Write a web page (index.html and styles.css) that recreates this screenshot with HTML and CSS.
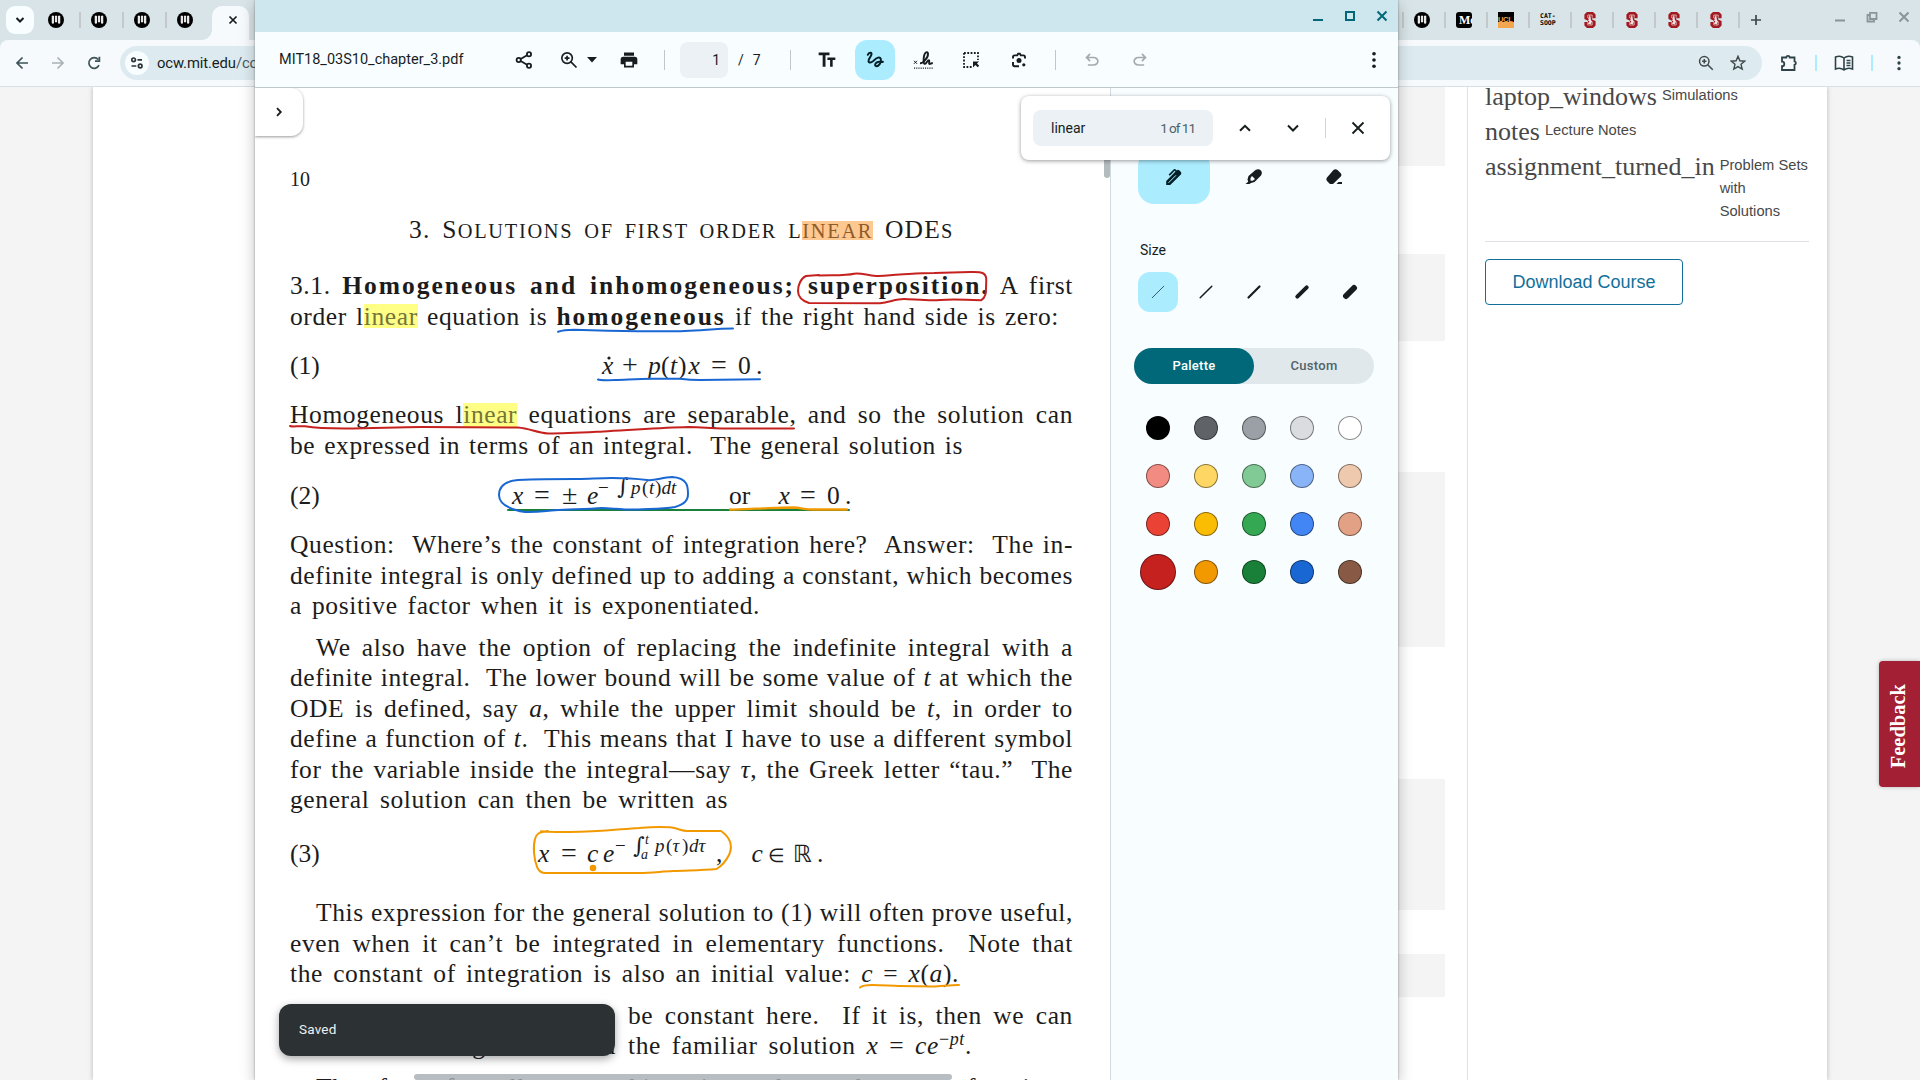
FILE: index.html
```html
<!DOCTYPE html>
<html lang="en">
<head>
<meta charset="utf-8">
<title>MIT18_03S10_chapter_3.pdf</title>
<link rel="stylesheet" href="styles.css">
</head>
<body>
<svg width="0" height="0" class="defs">
  <defs>
    <symbol id="mit" viewBox="0 0 16 16"><circle cx="8" cy="8" r="8" fill="#000"/><path d="M4.200 4h1.300v7.200H4.200zM7.400 4h1.300v6H7.400zM10.500 4h1.300v7.200h-1.300z" fill="#fff" stroke="#fff" stroke-width=".8"/></symbol>
    <symbol id="stanford" viewBox="0 0 16 16"><path d="M5 0h6l2.600 2.500v3.700h-3.500v1.200L13.600 9v4.500L11 16H5l-2.600-2.500V10h3.500V8.700L2.400 7V2.500z" fill="#a11a22"/><path d="M10.200 5.800V3H5.800v3l4.400 3.600V13H5.800v-3" fill="none" stroke="#e6c3c5" stroke-width=".8"/><path d="M8 2.500 6.500 6h.8L6 9h1.300L6 12h2.500v1.500L9 12l1-3H9l-.3-3z" fill="#fff" opacity=".85"/></symbol>
    <symbol id="zoomin" viewBox="0 0 24 24"><circle cx="9.700" cy="9.700" r="6.300" fill="none" stroke="currentColor" stroke-width="2"/><path d="M14.300 14.300 21 21M9.700 6.800v5.800M6.800 9.700h5.800" fill="none" stroke="currentColor" stroke-width="2"/></symbol>
    <symbol id="dots" viewBox="0 0 24 24"><circle cx="12" cy="4.500" r="2.200"/><circle cx="12" cy="12" r="2.200"/><circle cx="12" cy="19.500" r="2.200"/></symbol>
    <symbol id="undo" viewBox="0 0 24 24"><path d="M7 19v-2h7.100q1.575 0 2.737-1Q18 15 18 13.500T16.837 11Q15.675 10 14.100 10H7.800l2.600 2.600L9 14 4 9l5-5 1.400 1.400L7.800 8h6.300q2.425 0 4.163 1.575Q20 11.150 20 13.500t-1.737 3.925Q16.525 19 14.100 19z"/></symbol>
  </defs>
</svg>
<div class="desktop">
  <section class="browser">
    <div class="tabstrip">
      <div class="tab-search"><svg width="12" height="12" viewBox="0 0 12 12"><path d="M2.500 4 6 7.500 9.500 4" fill="none" stroke="#171d1e" stroke-width="2"/></svg></div>
      <div class="tabs-left">
        <svg class="fav"><use href="#mit"/></svg><i></i>
        <svg class="fav"><use href="#mit"/></svg><i></i>
        <svg class="fav"><use href="#mit"/></svg><i></i>
        <svg class="fav"><use href="#mit"/></svg>
      </div>
      <div class="tab-active"><svg width="10" height="10" viewBox="0 0 10 10"><path d="m1.500 1.500 7 7m0-7-7 7" stroke="#171d1e" stroke-width="1.700"/></svg></div>
      <div class="tabs-right">
        <i></i><svg class="fav"><use href="#mit"/></svg>
        <i></i><span class="fav fav-medium">Me</span>
        <i></i><span class="fav fav-ucl"><b>UCL</b></span>
        <i></i><span class="fav fav-cat">CAT-<br>SOOP</span>
        <i></i><svg class="fav"><use href="#stanford"/></svg>
        <i></i><svg class="fav"><use href="#stanford"/></svg>
        <i></i><svg class="fav"><use href="#stanford"/></svg>
        <i></i><svg class="fav"><use href="#stanford"/></svg>
        <i></i><svg class="plus" width="12" height="12" viewBox="0 0 12 12"><path d="M6 1v10M1 6h10" stroke="#3f484b" stroke-width="1.700"/></svg>
      </div>
      <div class="controls">
        <svg width="12" height="12" viewBox="0 0 12 12"><path d="M1 9.500h10" stroke="currentColor" stroke-width="2"/></svg>
        <svg width="12" height="12" viewBox="0 0 12 12"><path d="M4 1.800h6.500V8H4zM4 4H1.500v6.500H8V8" fill="none" stroke="currentColor" stroke-width="1.800"/></svg>
        <svg width="12" height="12" viewBox="0 0 12 12"><path d="m1.500 1.500 9 9m0-9-9 9" stroke="currentColor" stroke-width="2"/></svg>
      </div>
    </div>
    <div class="navbar">
      <svg width="14" height="14" viewBox="0 0 14 14"><path d="M13 7H2m5.500-5.500L2 7l5.500 5.500" fill="none" stroke="#3c5358" stroke-width="1.700"/></svg>
      <svg width="14" height="14" viewBox="0 0 14 14"><path d="M1 7h11M6.500 1.500 12 7l-5.500 5.500" fill="none" stroke="#a9b3b6" stroke-width="1.700"/></svg>
      <svg width="14" height="14" viewBox="0 0 14 14"><path d="M12 9.200A5.300 5.300 0 1 1 11.200 3.500M12.400.8v4.400H8" fill="none" stroke="#3c5358" stroke-width="1.700"/></svg>
      <div class="omnibox">
        <span class="site-info"><svg width="14" height="14" viewBox="0 0 14 14" fill="none" stroke="#2c3437" stroke-width="1.700"><circle cx="3.600" cy="3.800" r="1.800"/><path d="M7.500 3.800H12M1.500 10h4.800"/><circle cx="10.200" cy="10" r="1.800"/></svg></span>
        <span class="url">ocw.mit.edu<em>/co</em></span>
        <svg class="omni-zoom" width="18" height="18"><use href="#zoomin"/></svg>
        <svg class="omni-star" width="16" height="16" viewBox="0 0 16 16"><path d="m8 1.300 1.900 4.500 4.800.4-3.700 3.100 1.200 4.800L8 11.600l-4.200 2.500L5 9.300 1.300 6.200l4.800-.4z" fill="none" stroke="#3f484b" stroke-width="1.400"/></svg>
      </div>
      <div class="nav-actions">
        <svg width="18" height="18" viewBox="0 0 18 18"><path d="M2 3.500h4.300a1.700 1.700 0 0 1 3.400 0H14.500v3.800a1.800 1.800 0 0 1 0 3.500V16H2v-3.800a2.200 2.200 0 0 0 0-4.600z" fill="none" stroke="#2d4348" stroke-width="1.800"/></svg>
        <i></i>
        <svg width="20" height="18" viewBox="0 0 20 18"><path d="M10 4C7.500 2 4 2 1.500 3v12c2.500-1 6-1 8.500 1 2.500-2 6-2 8.500-1V3C16 2 12.500 2 10 4zv12M12.500 6.500h4M12.500 9h4M12.500 11.500h4" fill="none" stroke="#2d4348" stroke-width="1.600"/></svg>
        <i></i>
        <svg width="18" height="18" fill="#2d4348"><use href="#dots"/></svg>
      </div>
    </div>
    <div class="web">
      <div class="course">
        <div class="modules"><i class="m1"></i><i class="m2"></i><i class="m3"></i><i class="m4"></i><i class="m5"></i></div>
        <aside class="resources">
          <div class="res"><span class="glyph">laptop_windows</span><span>Simulations</span></div>
          <div class="res"><span class="glyph">notes</span><span>Lecture Notes</span></div>
          <div class="res last"><span class="glyph">assignment_turned_in</span><span>Problem Sets with Solutions</span></div>
          <hr>
          <a class="download">Download Course</a>
        </aside>
      </div>
      <div class="feedback"><span>Feedback</span></div>
    </div>
  </section>

  <section class="viewer">
    <div class="titlebar">
      <svg width="12" height="12" viewBox="0 0 12 12"><path d="M1 10h10" stroke="currentColor" stroke-width="2"/></svg>
      <svg width="12" height="12" viewBox="0 0 12 12"><path d="M2 2h8v8H2z" fill="none" stroke="currentColor" stroke-width="2"/></svg>
      <svg width="12" height="12" viewBox="0 0 12 12"><path d="m1.500 1.500 9 9m0-9-9 9" stroke="currentColor" stroke-width="2"/></svg>
    </div>
    <div class="toolbar">
      <span class="filename">MIT18_03S10_chapter_3.pdf</span>
      <svg class="t share" width="20" height="20" viewBox="0 0 20 20" fill="none" stroke="currentColor" stroke-width="1.800"><circle cx="15" cy="4.300" r="2.100"/><circle cx="4.700" cy="10" r="2.100"/><circle cx="15" cy="15.700" r="2.100"/><path d="m6.600 9 6.500-3.700M6.600 11l6.500 3.700"/></svg>
      <svg class="t zin" width="20" height="20"><use href="#zoomin"/></svg>
      <svg class="t caret" width="10" height="6" viewBox="0 0 10 6"><path d="M0 0h10L5 5.500z" fill="currentColor"/></svg>
      <svg class="t print" width="20" height="20" viewBox="0 0 24 24"><path d="M6 7V3h12v4zM2 17v-6q0-3 3-3h14q3 0 3 3v6h-4v4H6v-4zm6-3v5h8v-5z" fill="currentColor" fill-rule="evenodd"/></svg>
      <i></i>
      <span class="page-input">1</span><span class="pages">/ &nbsp;7</span>
      <i class="after-pages"></i>
      <svg class="t tt" width="20" height="20" viewBox="0 0 24 24"><path d="M2 3h13v3.200h-4.800V20H6.800V6.200H2zM12.500 9H22v3h-3.200v8h-3.100v-8h-3.200z" fill="currentColor"/></svg>
      <span class="draw"><svg width="20" height="20" viewBox="0 0 20 20"><path d="M2.800 4.800C4.500 2 7.300 2.300 6.300 5c-.8 2.400-3.200 4-2.800 6.300.6 2.400 3.800 1 6-1.400 2-2.300 5.300-3.400 6.300-1 1 3.600-2.500 7.800-4.700 7.200-2-.9-.6-3.800 2-4.200 2.200-.2 3.300.4 4.800-.1" fill="none" stroke="currentColor" stroke-width="2" stroke-linecap="round"/></svg></span>
      <svg class="t sign" width="22" height="20" viewBox="0 0 22 20"><path d="m2 10.800 3 3m0-3-3 3" stroke="currentColor" stroke-width="1"/><path d="M8 13.300c3 .2 8.500-6 8-9.800-.3-2.500-3.200-1.500-4 2.500-.6 3.500-.6 8.100 1 7.900 1.500-.2 2.500-3.800 3.900-3.600 1.200.2-.6 3.500.7 3.700 1 0 1.500-.8 3.200-1" fill="none" stroke="currentColor" stroke-width="1.900"/><path d="M2 18.200h19" stroke="currentColor" stroke-width="1.200" stroke-dasharray="1.100 1.100"/></svg>
      <svg class="t select" width="20" height="20" viewBox="0 0 20 20"><path d="M3 3h14v7M3 3v14h8" fill="none" stroke="currentColor" stroke-width="1.800" stroke-dasharray="1.800 1.500"/><path d="M12 11.500h6l-2 2 2.200 2.300-1.500 1.500-2.300-2.300-2.400 2.500z" fill="currentColor"/></svg>
      <svg class="t lens" width="20" height="20" viewBox="0 0 20 20"><path d="M4 8.500V7q0-1.600 1.600-1.600H8.200l.9-1.600h1.800l.9 1.600h2.600Q16 5.400 16 7v1.500M4 12v2.500q0 1.700 1.700 1.700H10" fill="none" stroke="currentColor" stroke-width="1.900"/><circle cx="10" cy="10.600" r="2.500" fill="currentColor"/><circle cx="14.800" cy="14.800" r="1.600" fill="currentColor"/></svg>
      <i class="after-lens"></i>
      <svg class="t undo" width="20" height="20" fill="#a3abad"><use href="#undo"/></svg>
      <svg class="t redo" width="20" height="20" fill="#a3abad"><use href="#undo"/></svg>
      <svg class="t more" width="20" height="20" fill="#171d1e"><use href="#dots"/></svg>
    </div>
    <div class="workspace">
      <div class="document">
        <div class="page">
          <p class="ln folio">10</p>
          <p class="ln heading">3. S<span class="sc">olutions of first order l<mark>inear</mark></span> ODE<span class="sc">s</span></p>
          <p class="ln g1">3.1. <b>Homogeneous and inhomogeneous; superposition.</b> A first</p>
          <p class="ln w-zero">order l<mark>inear</mark> equation is <b>homogeneous</b> if the right hand side is zero:</p>
          <svg class="eq g2" viewBox="0 1 783 30.500"><text y="23.700"><tspan x="0">(1)</tspan><tspan x="312" class="it">x</tspan><tspan x="332" class="op">+</tspan><tspan x="358" class="it">p</tspan><tspan x="371">(</tspan><tspan x="380" class="it">t</tspan><tspan x="388">)</tspan><tspan x="398.500" class="it">x</tspan><tspan x="421" class="op">=</tspan><tspan x="448">0</tspan><tspan x="466">.</tspan></text><circle cx="319" cy="8" r="1.600"/></svg>
          <p class="ln g3">Homogeneous l<mark>inear</mark> equations are separable, and so the solution can</p>
          <p class="ln w-is">be expressed in terms of an integral.&nbsp; The general solution is</p>
          <svg class="eq g4" viewBox="0 1 783 30.500"><text y="23.700"><tspan x="0">(2)</tspan><tspan x="222" class="it">x</tspan><tspan x="244" class="op">=</tspan><tspan x="272" class="op">±</tspan><tspan x="297" class="it">e</tspan><tspan x="439">or</tspan><tspan x="488.500" class="it">x</tspan><tspan x="510" class="op">=</tspan><tspan x="537">0</tspan><tspan x="555">.</tspan></text><text y="13.500" class="sup"><tspan x="308">−</tspan><tspan x="341" class="it">p</tspan><tspan x="352">(</tspan><tspan x="359" class="it">t</tspan><tspan x="365">)</tspan><tspan x="371.500" class="it">dt</tspan></text><text x="327" y="14" class="int">∫</text></svg>
          <p class="ln g3">Question:&nbsp; Where’s the constant of integration here?&nbsp; Answer:&nbsp; The in-</p>
          <p class="ln">definite integral is only defined up to adding a constant, which becomes</p>
          <p class="ln w-exp">a positive factor when it is exponentiated.</p>
          <p class="ln g5 indent">We also have the option of replacing the indefinite integral with a</p>
          <p class="ln">definite integral.&nbsp; The lower bound will be some value of <em>t</em> at which the</p>
          <p class="ln">ODE is defined, say <em>a</em>, while the upper limit should be <em>t</em>, in order to</p>
          <p class="ln">define a function of <em>t</em>.&nbsp; This means that I have to use a different symbol</p>
          <p class="ln">for the variable inside the integral—say <em>τ</em>, the Greek letter “tau.”&nbsp; The</p>
          <p class="ln w-as">general solution can then be written as</p>
          <svg class="eq g6" viewBox="0 1 783 30.500"><text y="23.700"><tspan x="0">(3)</tspan><tspan x="248" class="it">x</tspan><tspan x="271" class="op">=</tspan><tspan x="297" class="it">c</tspan><tspan x="313" class="it">e</tspan><tspan x="426">,</tspan><tspan x="461.500" class="it">c</tspan><tspan x="478" class="el">∈</tspan><tspan x="503" class="bb">ℝ</tspan><tspan x="527">.</tspan></text><text y="13.500" class="sup"><tspan x="325">−</tspan><tspan x="365" class="it">p</tspan><tspan x="376">(</tspan><tspan x="382.500" class="it">τ</tspan><tspan x="392">)</tspan><tspan x="399" class="it">dτ</tspan></text><text x="343" y="15" class="int">∫</text><text x="355" y="6" class="sub">t</text><text x="351" y="20.500" class="sub">a</text></svg>
          <p class="ln g7 indent">This expression for the general solution to (1) will often prove useful,</p>
          <p class="ln">even when it can’t be integrated in elementary functions.&nbsp; Note that</p>
          <p class="ln w-val">the constant of integration is also an initial value: <em>c</em> = <em>x</em>(<em>a</em>).</p>
          <div class="split g5"><p class="ln lead first indent">The coefficient <em>p</em> may</p><p class="ln rest">be constant here.&nbsp; If it is, then we can</p></div>
          <div class="split"><p class="ln lead">or solve the integral and find</p><p class="ln w-pt">the familiar solution <em>x</em> = <em>ce</em><sup>−<em>pt</em></sup>.</p></div>
          <p class="ln g5 indent w-last">Therefore formally everything is understood as a function.</p>
        </div>
        <svg class="ink" viewBox="255 88 855 992" fill="none" stroke-width="2" stroke-linecap="round" stroke-linejoin="round">
          <g stroke="#c5221f"><path d="M819 275 806 276C801 278 798 285 798 291c0 7 5 10 11 12l71 .2C890 302 896 299 904 299s24 2 36 1 30-.2 41 .3c6-3 4.700-10 5.300-20 .2-9-6-8-16-8.300L934 273c-14 0-24 1-34 1.500s-15 2-24 1.500-15-3.500-22-2.300c-8 2-20 1.300-35 1.800"/><path d="M290 426c4 1.500 8-.5 15 .3 12 2 25 2.200 40 2.200 30 0 50-1.500 77-1.500l96 .5c12 1 18 5 30 6 20 0 40-1.300 60-2.300 30-1.600 55-3.500 80-4.200 15 0 22 1.600 35 1.500h71"/></g>
          <g stroke="#1967d2"><path d="M558 331.700c6-2 10-2 16-2l34 1c30 .6 60 1 77 .3 20-.7 30-2.500 48-2.500"/><path d="M598 379.500c2 1 8 .8 17 .5 14-.5 24-1.300 37-1.300h28c8 1 12 1.300 20 1.300l60-.7"/></g>
          <path d="M508 510H849" stroke="#188038"/>
          <path d="M730 509.500c10 .3 15-.6 25-.8 15-.5 26-1.200 38-1.200 8 .3 12 2 20 2h34" stroke="#f29900" stroke-width="2.300"/>
          <path d="M575 479c-20 0-45 .5-57 1-12 1-19 5-19 15 0 8 8 14 26 17 12 .5 20-1 30-1.700 15-1 32-1 47-2.300 12 .5 24 2 36 1.500 15-.7 25-.5 37-2.500 9-3 13-6 13-13 0-7 0-16-16-17-10 .3-17 4-25 3-12-1.500-22-2-35-2-14 0-25 1.200-37 1z" stroke="#1967d2"/>
          <g stroke="#f29900"><path d="M548 831c-9 1-12 3-13 8-2 7-1.500 20 2.500 29 2 4 4 5 8 5h94c11 0 22-1.500 33-2 16-.8 28-.5 44-2 7-4 10-9 13-15 3-8 1.500-16-8.500-23h-34c-6 0-8-2.500-17-3.700-9-.6-21-.2-31 .7-18 1-40 4-70 4-12 .5-20-.5-28-.7"/><path d="M860 987.500c3-2.500 7-2.500 12-2.500 10 0 18 .8 27 1l34 .5c8 0 16-1.500 26-1.500"/><circle cx="593" cy="868" r="2.300" fill="#f29900"/></g>
        </svg>
        <div class="vbar"></div>
        <div class="hbar"></div>
        <div class="expand"><svg width="12" height="12" viewBox="0 0 12 12"><path d="M4 2.200 7.800 6 4 9.800" fill="none" stroke="#171d1e" stroke-width="1.800"/></svg></div>
        <div class="toast">Saved</div>
      </div>
      <aside class="panel">
        <div class="tools">
          <span class="on"><svg width="20" height="20" viewBox="0 0 20 20"><path d="M2.200 18v-4L11.500 4.500l-.8-.7-4.900 4.900-1.200-1.200 5-5q1.100-1 2.200 0l.9.9q1.300-1.200 2.500-.2l1.500 1.500q1.300 1.300.2 2.700L6.200 18z" fill="currentColor"/><path d="M4.500 15.800 12 8.300" stroke="#abecff" stroke-width="1"/></svg></span>
          <span><svg width="20" height="20" viewBox="0 0 20 20"><path d="M4.200 14.800 3.500 12.500l1-3.500L11.500 3q3-1.800 5.200.3 2.200 2.200.3 5.200l-6.500 6.500-3.500 1L5.500 17H1.500z" fill="currentColor"/><path d="m8 9 3 3-2.200 1.800H6.500V11z" fill="#f8fdff"/></svg></span>
          <span><svg width="20" height="20" viewBox="0 0 20 20"><path d="M9.500 3q2-1.500 4 0l3.300 3.300q1.500 1.600 0 3.300L9 17H6L3 14q-1.500-1.700 0-3.500zM12.500 17l2-2H18v2z" fill="currentColor"/></svg></span>
        </div>
        <h2>Size</h2>
        <div class="sizes">
          <span class="on"><svg viewBox="0 0 16 16"><path d="M2.200 13.800 13.800 2.200" stroke-width="1" stroke="#35606a"/></svg></span>
          <span><svg viewBox="0 0 16 16"><path d="M2.200 13.800 13.800 2.200" stroke-width="1.500"/></svg></span>
          <span><svg viewBox="0 0 16 16"><path d="M2.500 13.500l11-11" stroke-width="2.200"/></svg></span>
          <span><svg viewBox="0 0 16 16"><path d="M3.300 12.700l9.400-9.400" stroke-width="4"/></svg></span>
          <span><svg viewBox="0 0 16 16"><path d="M4 12l8-8" stroke-width="6"/></svg></span>
        </div>
        <div class="toggle"><span class="on">Palette</span><span>Custom</span></div>
        <div class="swatches">
          <i style="background:#000"></i><i style="background:#5f6368"></i><i style="background:#9aa0a6"></i><i style="background:#dadce0"></i><i style="background:#fff"></i>
          <i style="background:#f28b82"></i><i style="background:#fdd663"></i><i style="background:#81c995"></i><i style="background:#8ab4f8"></i><i style="background:#eec9ae"></i>
          <i style="background:#ea4335"></i><i style="background:#fbbc04"></i><i style="background:#34a853"></i><i style="background:#4285f4"></i><i style="background:#e2a185"></i>
          <i class="big" style="background:#c5221f"></i><i style="background:#f29900"></i><i style="background:#188038"></i><i style="background:#1967d2"></i><i style="background:#885945"></i>
        </div>
      </aside>
      <div class="find">
        <div class="find-input"><span>linear</span><small>1 of 11</small></div>
        <svg class="up" width="14" height="14" viewBox="0 0 14 14"><path d="m2 9.800 5-5 5 5" fill="none" stroke="#171d1e" stroke-width="2"/></svg>
        <svg class="down" width="14" height="14" viewBox="0 0 14 14"><path d="m2 4.500 5 5 5-5" fill="none" stroke="#171d1e" stroke-width="2"/></svg>
        <i></i>
        <svg class="x" width="14" height="14" viewBox="0 0 14 14"><path d="m1.500 1.500 11 11m0-11-11 11" stroke="#171d1e" stroke-width="1.800"/></svg>
      </div>
    </div>
  </section>
</div>
</body>
</html>
```
FILE: styles.css
```css
* { box-sizing: border-box; }
body { margin: 0; font-family: Roboto, "Noto Sans", sans-serif; color: #171d1e; }
.defs { position: absolute; }
svg { flex: none; display: block; }
.desktop { position: relative; width: 1920px; height: 1080px; overflow: hidden; }

/* background browser window */
.browser { height: 1080px; display: flex; flex-direction: column; background: #d8e4e8; }
.tabstrip { height: 40px; display: flex; }
.tab-search { width: 28px; height: 28px; margin: 6px 0 0 6px; border-radius: 9px; background: #f8fdff; display: grid; place-items: center; }
.tabs-left { display: flex; align-items: center; margin-left: 14px; }
.fav { width: 16px; height: 16px; }
.tabstrip i { width: 2px; height: 16px; background: #c3c9cb; flex: none; }
.tabs-left i { margin: 0 10px 0 15px; }
.tab-active { width: 37px; margin: 6px 0 0 19px; border-radius: 10px 10px 0 0; background: #f6fafd; padding: 9px 0 0 16px; position: relative; }
.tab-active::before { content: ""; position: absolute; left: -10px; bottom: 0; width: 10px; height: 10px; background: radial-gradient(circle at 0 0, transparent 9.500px, #f6fafd 10px); }
.tabs-right { display: flex; align-items: center; margin-left: 1153px; }
.tabs-right .fav { margin: 0 14px 0 10px; flex: none; }
.tabs-right .plus { margin-left: 10px; }
.fav-medium { background: #000; border-radius: 3px; color: #fff; font: bold 12px/16px "Liberation Serif", serif; overflow: hidden; padding-left: 3px; }
.fav-ucl { background: linear-gradient(#000 62%, #f4a64e 62%); overflow: hidden; }
.fav-ucl b { display: block; font: bold 7.500px/15px "Liberation Sans", sans-serif; color: #f4a64e; letter-spacing: -.3px; }
.fav-cat { font: bold 6.500px/7px "DejaVu Sans Mono", monospace; color: #000; padding-top: 1px; }
.controls { display: flex; gap: 20px; margin: 11px 0 0 72px; color: #8b9598; }

.navbar { height: 47px; background: #f6fafd; border-bottom: 1px solid #d5e1e5; border-radius: 8px 8px 0 0; display: flex; align-items: center; padding-left: 15px; }
.navbar > svg { margin-right: 22px; }
.omnibox { width: 1642px; height: 34px; border-radius: 17px; background: #ddebf0; display: flex; align-items: center; padding-left: 5px; margin-left: -3px; }
.site-info { width: 24px; height: 24px; border-radius: 50%; background: #f8fdff; display: grid; place-items: center; }
.url { font-size: 14.800px; letter-spacing: -.1px; margin-left: 8px; color: #171d1e; }
.url em { font-style: normal; color: #4c5b60; }
.omni-zoom { margin-left: auto; color: #3f484b; }
.omni-star { margin: 0 16px 0 15px; }
.nav-actions { display: flex; align-items: center; padding-left: 18px; }
.nav-actions i { width: 2px; height: 16px; background: #abecff; margin: 0 17px; }

.web { flex: 1; background: #f4f4f4; display: flex; overflow: hidden; position: relative; }
.course { width: 1734px; margin-left: 93px; background: #fff; box-shadow: 0 0 5px rgba(0,0,0,.25); display: flex; }
.modules { width: 1352px; margin-right: 22px; padding-left: 240px; display: flex; flex-direction: column; }
.modules i { background: #f4f4f4; }
.m1 { height: 79px; margin-bottom: 88px; }
.m2 { height: 87px; margin-bottom: 131px; }
.m3 { height: 175px; margin-bottom: 132px; }
.m4 { height: 131px; margin-bottom: 44px; }
.m5 { height: 43px; }
.resources { width: 360px; border-left: 1px solid #dee2e6; padding: 0 18px 0 17px; color: #484848; }
.res { display: flex; gap: 5px; height: 35px; font: 14.700px/23px "Liberation Sans", Arial, sans-serif; margin-top: -4px; }
.res + .res { margin-top: 0; }
.res > span:last-child { padding-top: 1px; }
.res.last { height: 88px; }
.glyph { font: 26px/27px "Liberation Serif", serif; }
.resources hr { border: 0; border-top: 1px solid #dee2e6; margin: 0 0 17px; }
.download { display: grid; place-items: center; width: 198px; height: 46px; border: 1.500px solid #126f9a; border-radius: 4px; color: #126f9a; font: 18px "Liberation Sans", Arial, sans-serif; }
.feedback { position: absolute; right: 0; top: 574px; width: 41px; height: 126px; background: #a31f34; border-radius: 4px 0 0 4px; box-shadow: 0 0 4px rgba(0,0,0,.25); display: grid; place-items: center; }
.feedback span { writing-mode: vertical-rl; transform: rotate(180deg); color: #fff; font: bold 20.500px/24px "Liberation Serif", serif; padding: 0 0 4px 0; margin: 0 4px 0 0; }

/* document viewer window */
.viewer { position: absolute; left: 255px; top: 0; width: 1143px; height: 1080px; background: #fff; display: flex; flex-direction: column; box-shadow: 0 0 2px rgba(0,0,0,.35), 0 4px 14px rgba(0,0,0,.25); }
.titlebar { height: 32px; background: #cee7ee; display: flex; justify-content: flex-end; gap: 20px; padding: 10px 10px 0 0; color: #006879; }
.toolbar { height: 56px; background: #f8fdff; border-bottom: 1px solid #bfc8ca; display: flex; align-items: center; padding-left: 24px; color: #171d1e; font-size: 15px; }
.toolbar i { width: 1px; height: 20px; background: #bfc8ca; }
.filename { width: 235px; font-size: 14.500px; white-space: nowrap; }
.zin { margin-left: 25px; }
.caret { margin-left: 8px; }
.print { margin: 0 25px 0 22px; }
.page-input { width: 48px; height: 36px; margin-left: 15px; border-radius: 8px; background: #ebf1f4; line-height: 36px; text-align: right; padding-right: 8px; font-size: 14px; }
.pages { width: 36px; margin-left: 10px; font-size: 14px; word-spacing: 1px; white-space: nowrap; }
.after-pages { margin: 0 26px 0 16px; }
.draw { width: 40px; height: 40px; margin-left: 18px; border-radius: 12px; background: #abecff; display: grid; place-items: center; color: #001f26; }
.sign { margin-left: 17px; }
.select { margin-left: 27px; }
.lens { margin-left: 28px; }
.after-lens { margin: 0 26px; }
.redo { margin-left: 28px; transform: scaleX(-1); }
.more { margin-left: auto; margin-right: 14px; }

.workspace { flex: 1; display: flex; position: relative; overflow: hidden; }
.document { width: 855px; position: relative; overflow: hidden; height: 992px; }
.page { padding: 76px 0 0 35px; width: 818px; font: 25.500px/30.500px "Liberation Serif", "Times New Roman", serif; color: #1c1c1c; letter-spacing: .62px; }
.ln { margin: 0; height: 30.500px; white-space: nowrap; text-align: justify; text-align-last: justify; }
.folio { font-size: 20px; text-align-last: left; letter-spacing: 0; }
.heading { margin-top: 20.800px; padding-left: 119px; width: 664px; letter-spacing: 1.200px; }
.sc { font-size: .8em; text-transform: uppercase; letter-spacing: 1.700px; }
.indent { padding-left: 26px; }
.page b { letter-spacing: 2px; }
.g1 { margin-top: 25.500px; }
.g2 { margin-top: 19px; }
.g3 { margin-top: 18.500px; }
.g4 { margin-top: 20px; }
.g5 { margin-top: 11px; }
.g6 { margin-top: 23px; }
.g7 { margin-top: 29px; }
.w-zero { width: 769px; }
.w-is { width: 673px; }
.w-exp { width: 470px; }
.w-as { width: 438px; }
.w-val { width: 669px; }
.w-pt { width: 344px; }
.w-last { width: 774px; }
.split { display: flex; }
.lead { width: 326px; margin-right: 12px; }
.lead.first { width: 314px; margin-right: 24px; }
.rest { width: 445px; }
.page sup { font-size: 18px; line-height: 0; vertical-align: 9px; }
.page mark { background: linear-gradient(#ffff85, #ffff85) no-repeat 0 50% / 100% 24px; color: #75753a; }
.heading mark { background: linear-gradient(#ffc891, #ffc891) no-repeat 0 20% / 100% 19px; color: #8e5b2a; }
.eq { width: 783px; height: 30.500px; overflow: visible; fill: #1c1c1c; letter-spacing: 0; }
.it, .sub { font-style: italic; }
.op { font-size: 28px; }
.el { font-family: "DejaVu Sans", sans-serif; font-size: 19px; }
.bb { font-family: "DejaVu Sans", sans-serif; font-size: 24px; }
.sup { font-size: 19px; }
.int { font: 22px "DejaVu Serif", serif; }
.sub { font-size: 14px; }
.ink { position: absolute; left: 0; top: 0; width: 855px; height: 992px; }
.vbar { position: absolute; right: 0; top: 20px; width: 6px; height: 70px; border-radius: 3px; background: #b4bbbe; }
.hbar { position: absolute; left: 159px; bottom: 0; width: 538px; height: 6px; border-radius: 3px; background: rgba(165,173,176,.8); }
.expand { position: absolute; left: 0; top: 0; width: 48px; height: 48px; background: #fff; border-radius: 0 12px 12px 0; box-shadow: 0 1px 3px rgba(0,0,0,.4); display: grid; place-items: center; }
.toast { position: absolute; left: 24px; top: 916px; width: 336px; height: 52px; border-radius: 12px; background: #2c3134; color: #ecf2f3; font-size: 13.500px; line-height: 50px; padding-left: 20px; box-shadow: 0 3px 8px rgba(0,0,0,.35); letter-spacing: .2px; }

.panel { width: 288px; background: #f8fdff; border-left: 1px solid #d3dadd; padding-left: 27px; }
.tools { display: flex; gap: 8px; padding-top: 62px; }
.tools span { width: 72px; height: 54px; display: grid; place-items: center; border-radius: 16px; color: #171d1e; }
.tools .on { background: #abecff; color: #001f26; }
.panel h2 { font: 14px/20px Roboto, sans-serif; letter-spacing: 0; margin: 36px 0 12px 2px; }
.sizes { display: flex; gap: 8px; }
.sizes span { width: 40px; height: 40px; border-radius: 12px; display: grid; place-items: center; }
.sizes .on { background: #abecff; }
.sizes svg { width: 16px; height: 16px; stroke: #171d1e; stroke-linecap: round; }
.toggle { display: flex; width: 240px; height: 36px; margin: 36px 0 0 -4px; border-radius: 18px; background: #e1e8eb; font: 500 13px/35px Roboto, sans-serif; letter-spacing: .3px; text-align: center; color: #4f6368; }
.toggle span { flex: 1; border-radius: 18px; }
.toggle .on { background: #006879; color: #fff; }
.swatches { display: grid; grid-template-columns: repeat(5, 48px); grid-auto-rows: 48px; place-items: center; margin: 20px 0 0 -4px; }
.swatches i { width: 24px; height: 24px; border-radius: 50%; border: 1px solid rgba(0,0,0,.45); }
.swatches .big { width: 36px; height: 36px; }

.find { position: absolute; left: 766px; top: 8px; width: 369px; height: 64px; border-radius: 8px; background: #fff; box-shadow: 0 1px 4px rgba(0,0,0,.4); display: flex; align-items: center; padding-left: 12px; }
.find-input { width: 180px; height: 36px; border-radius: 8px; background: #ebf1f4; display: flex; justify-content: space-between; align-items: center; padding: 0 18px; font-size: 14px; }
.find-input small { font-size: 13.500px; letter-spacing: -1px; color: #4b6268; }
.up { margin-left: 25px; }
.down { margin-left: 34px; }
.find i { width: 1px; height: 20px; background: #cfd6d8; margin: 0 25px; }
```
